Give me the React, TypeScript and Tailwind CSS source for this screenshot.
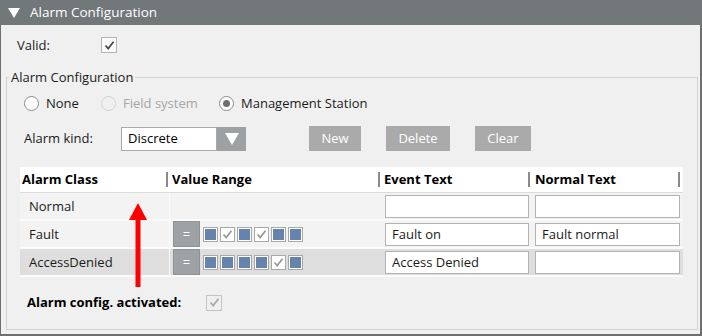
import React from 'react';

const Check = ({ color = '#4a4a4a' }: { color?: string }) => (
  <svg width="11" height="11" viewBox="0 0 11 11">
    <path d="M1.5 5.5 L4.2 8.5 L9.5 1.8" fill="none" stroke={color} strokeWidth="1.8" />
  </svg>
);

const CheckBox = ({ disabled = false }: { disabled?: boolean }) => (
  <div
    className={
      'w-[16px] h-[16px] border flex items-center justify-center ' +
      (disabled ? 'border-[#c4c4c4] bg-[#f0f0f0]' : 'border-[#b4b4b4] bg-[#fafafa]')
    }
  >
    <Check color={disabled ? '#a8a8a8' : '#4a4a4a'} />
  </div>
);

const Radio = ({ label, checked = false, disabled = false, w }: { label: string; checked?: boolean; disabled?: boolean; w: string }) => (
  <div className={'flex items-center gap-[7px] ' + w}>
    <div
      className={
        'w-[15px] h-[15px] rounded-full border flex items-center justify-center ' +
        (disabled ? 'border-[#d2d2d2] bg-[#f0f0f0]' : 'border-[#8c8c8c] bg-white')
      }
    >
      {checked && <div className="w-[7px] h-[7px] rounded-full bg-[#6e6e6e]" />}
    </div>
    <span className={disabled ? 'text-[#a6a6a6]' : 'text-[#1b1b1b]'}>{label}</span>
  </div>
);

const Btn = ({ label, w }: { label: string; w: string }) => (
  <div className={'h-[25px] bg-[#aaaaaa] text-white flex items-center justify-center ' + w}>{label}</div>
);

const Squares = ({ pattern }: { pattern: boolean[] }) => (
  <div className="flex gap-[2px] ml-[3px]">
    {pattern.map((on, i) => (
      <div key={i} className="w-[15px] h-[15px] border border-[#a9a9a9] bg-white p-[1px] flex items-center justify-center">
        {on ? <div className="w-full h-full bg-[#6583ac]" /> : <Check color="#9a9a9a" />}
      </div>
    ))}
  </div>
);

const rows = [
  { name: 'Normal', event: '', normal: '', range: null as boolean[] | null, bg: 'bg-[#f3f3f3]' },
  { name: 'Fault', event: 'Fault on', normal: 'Fault normal', range: [true, false, true, false, true, true], bg: 'bg-[#f3f3f3]' },
  { name: 'AccessDenied', event: 'Access Denied', normal: '', range: [true, true, true, true, false, true], bg: 'bg-[#dedede]' },
];

const HeadCell = ({ label, pl, mr }: { label: string; pl: string; mr: string }) => (
  <div className={'flex items-center justify-between ' + pl}>
    <span className="font-bold text-black">{label}</span>
    <div className={'w-[2px] h-[15px] bg-[#8a8a8a] ' + mr} />
  </div>
);

const TextBox = ({ value, w }: { value: string; w: string }) => (
  <div className={'h-[23px] bg-white border border-[#b3b3b3] flex items-center pl-[6px] text-[#1b1b1b] ' + w}>{value}</div>
);

export default function App() {
  return (
    <div className="w-[702px] h-[336px] bg-[#f0f0f0] flex flex-col text-[13px] font-['Open_Sans',sans-serif] leading-none">
      <div className="h-[25px] bg-[#72777a] flex items-center text-white shrink-0">
        <svg className="ml-[8px]" width="12" height="10" viewBox="0 0 12 10">
          <path d="M0 0 H12 L6 10 Z" fill="white" />
        </svg>
        <span className="ml-[10px] text-[13.5px]">Alarm Configuration</span>
      </div>
      <div className="relative flex-1 flex flex-col border-l border-r-2 border-b-2 border-[#6f6f6f]">
        <div className="flex items-center h-[20px] mt-[10px]">
          <span className="ml-[16px] w-[84px] text-[#1b1b1b]">Valid:</span>
          <CheckBox />
        </div>
        <fieldset className="mt-[14px] ml-[5px] mr-[2px] mb-[4px] flex-1 border border-[#d3d3d3] flex flex-col">
          <legend className="ml-[2px] px-[2px] leading-[16px] text-[#1b1b1b]">Alarm Configuration</legend>
          <div className="flex items-center h-[20px] mt-[8px] ml-[17px]">
            <Radio label="None" w="w-[77px]" />
            <Radio label="Field system" disabled w="w-[118px]" />
            <Radio label="Management Station" checked w="" />
          </div>
          <div className="flex items-center h-[25px] mt-[13px] ml-[17px]">
            <span className="w-[97px] text-[#1b1b1b]">Alarm kind:</span>
            <div className="flex h-[24px] w-[125px]">
              <div className="flex-1 bg-white border border-[#a9a9a9] flex items-center pl-[6px] text-black">Discrete</div>
              <div className="w-[29px] bg-[#9da1a3] flex items-center justify-center">
                <svg width="16" height="14" viewBox="0 0 16 14">
                  <path d="M1 1 H15 L8 13 Z" fill="white" />
                </svg>
              </div>
            </div>
            <div className="ml-[63px]"><Btn label="New" w="w-[52px]" /></div>
            <div className="ml-[25px]"><Btn label="Delete" w="w-[64px]" /></div>
            <div className="ml-[25px]"><Btn label="Clear" w="w-[56px]" /></div>
          </div>
          <div className="mt-[16px] ml-[13px] w-[663px]">
            <div className="grid grid-cols-[150px_211px_150px_152px] h-[26px] bg-white border-b border-[#dcdcdc]">
              <HeadCell label="Alarm Class" pl="pl-[2px]" mr="mr-[2px]" />
              <HeadCell label="Value Range" pl="pl-[2px]" mr="mr-[1px]" />
              <HeadCell label="Event Text" pl="pl-[3px]" mr="mr-[1px]" />
              <HeadCell label="Normal Text" pl="pl-[4px]" mr="mr-[3px]" />
            </div>
            {rows.map((r) => (
              <div key={r.name} className={'grid grid-cols-[150px_211px_150px_152px] h-[28px] border-b-2 border-[#fbfbfb] text-[#1b1b1b] ' + r.bg}>
                <div className="flex items-center pl-[9px] border-r border-[#fafafa]">{r.name}</div>
                <div className="flex items-center">
                  {r.range && (
                    <>
                      <div className="ml-[3px] w-[27px] h-[26px] bg-[#9ea2a4] border border-[#8e9294] text-white flex items-center justify-center">=</div>
                      <Squares pattern={r.range} />
                    </>
                  )}
                </div>
                <div className="flex items-center pl-[4px]">
                  <TextBox value={r.event} w="w-[144px]" />
                </div>
                <div className="flex items-center pl-[4px]">
                  <TextBox value={r.normal} w="w-[145px]" />
                </div>
              </div>
            ))}
          </div>
          <div className="flex items-center h-[17px] mt-[17px] ml-[20px]">
            <span className="w-[179px] font-bold text-black">Alarm config. activated:</span>
            <CheckBox disabled />
          </div>
        </fieldset>
        <svg className="absolute left-[126px] top-[178px]" width="22" height="84" viewBox="0 0 22 84">
          <path d="M11 0 L20 17 L2 17 Z" fill="#ff0000" />
          <rect x="8.5" y="15" width="5" height="69" fill="#ff0000" />
        </svg>
      </div>
    </div>
  );
}
